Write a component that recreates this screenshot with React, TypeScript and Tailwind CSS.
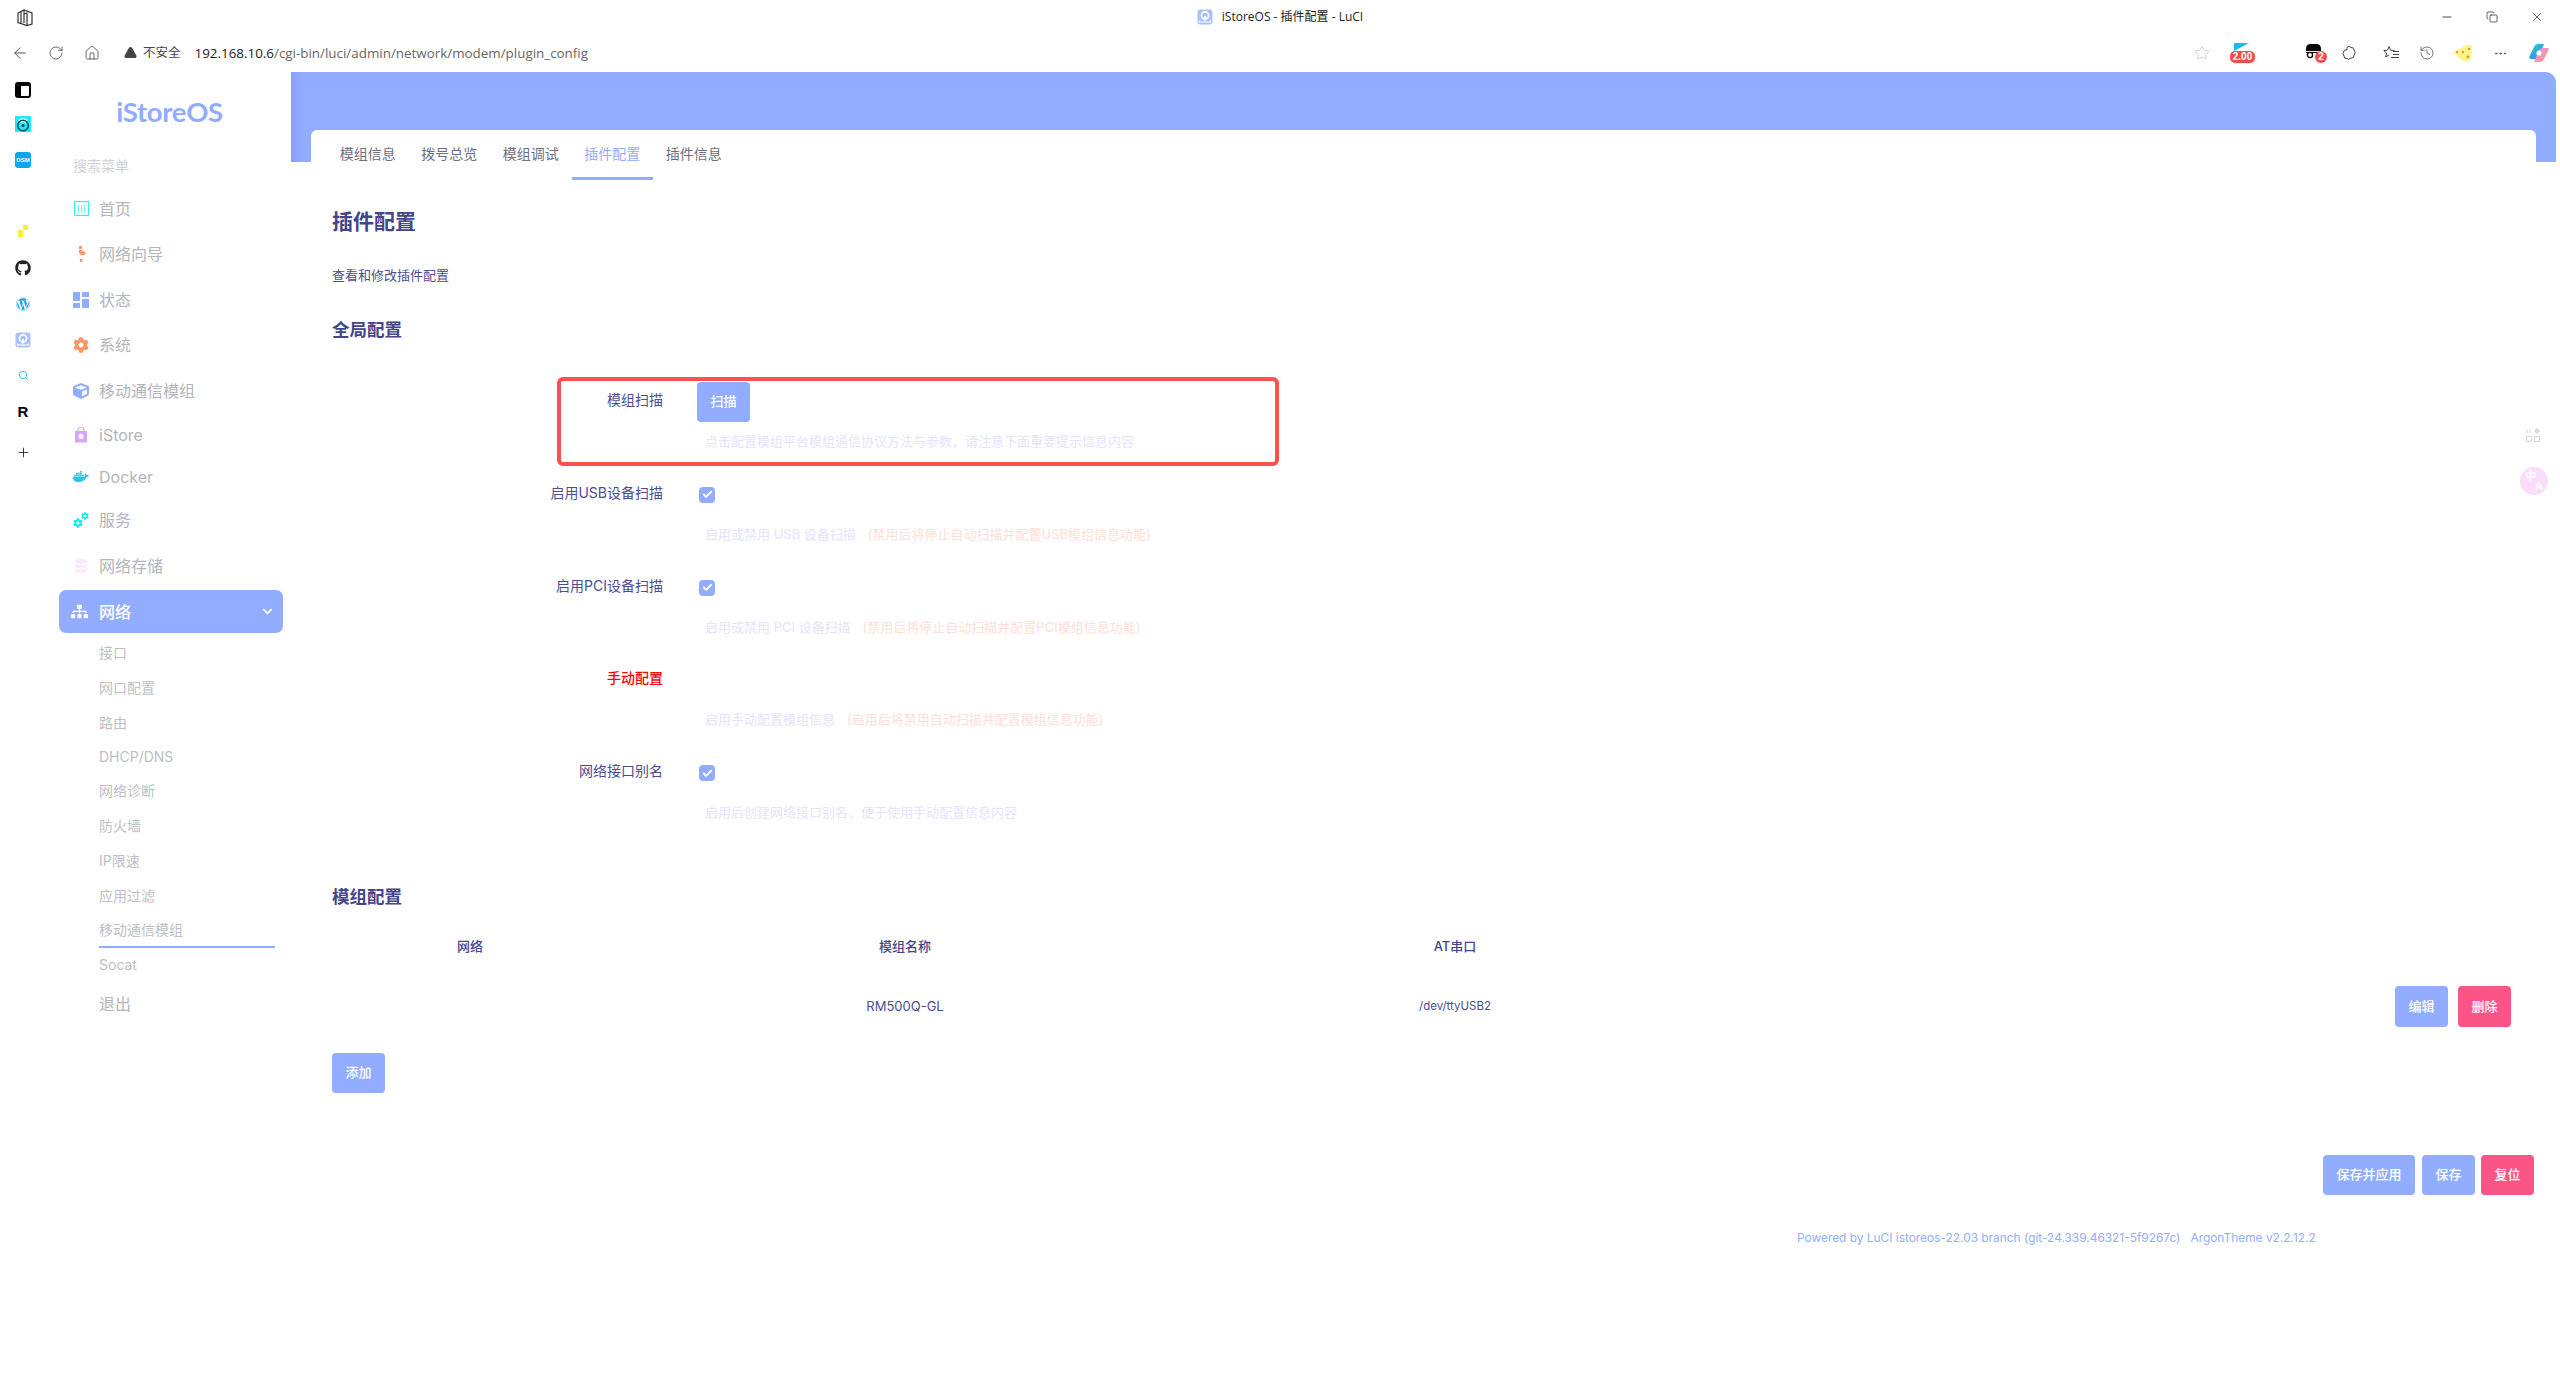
import {
  FaChevronDown,
  FaCog,
  FaCube,
  FaDatabase,
  FaDocker,
  FaGithub,
  FaSitemap,
  FaWordpress,
} from "react-icons/fa";
import {
  ArrowLeft,
  Check,
  Copy,
  History,
  Home,
  Minus,
  MoreHorizontal,
  Plus,
  RotateCw,
  Search,
  Star,
  TriangleAlert,
  X,
} from "lucide-react";
import type { ReactNode } from "react";

const font = "font-['Inter','Noto_Sans_CJK_SC',sans-serif]";

function KeyholeIcon({ size = 16 }: { size?: number }) {
  return (
    <svg width={size} height={size} viewBox="0 0 16 16">
      <rect x="0.5" y="0.5" width="15" height="15" rx="3" fill="#a9c1fb" />
      <circle cx="8" cy="6.5" r="3.6" fill="none" stroke="#fff" strokeWidth="1.6" />
      <rect x="7" y="7" width="2" height="4.5" fill="#fff" />
      <path d="M2.5 11.5v1.5h11v-1.5" fill="none" stroke="#fff" strokeWidth="1.2" />
    </svg>
  );
}

function TitleBar() {
  return (
    <div className="flex h-9 items-center pb-[2px] pl-4 pr-[16px] text-[#222]">
      <div className="flex-1">
        <svg width="18" height="20" viewBox="0 0 18 20" fill="none" stroke="#333" strokeWidth="1.2">
          <path d="M2 6l6-3 8 3v11l-5 1.5-9-3z" />
          <path d="M8 7l3-1v12.5M5 4.5v12M8 3v13" />
        </svg>
      </div>
      <div className="flex items-center gap-[9px] text-[12px] font-['Open_Sans','Noto_Sans_CJK_SC',sans-serif]">
        <KeyholeIcon />
        <span>iStoreOS - 插件配置 - LuCI</span>
      </div>
      <div className="flex flex-1 items-center justify-end gap-[32px]">
        <Minus size={14} strokeWidth={1.4} />
        <Copy size={12} strokeWidth={1.4} />
        <X size={14} strokeWidth={1.2} />
      </div>
    </div>
  );
}

function Toolbar() {
  return (
    <div className="flex h-9 items-center justify-between pb-[2px] pl-[11px] pr-[10px] text-[#444]">
      <div className="flex items-center">
        <ArrowLeft size={18} strokeWidth={1.2} />
        <RotateCw size={16} strokeWidth={1.2} className="ml-[19px]" />
        <Home size={16} strokeWidth={1.2} className="ml-[20px]" />
        <TriangleAlert size={13} strokeWidth={2.4} className="ml-[24px] fill-[#444] text-[#444]" />
        <span className="ml-[6px] text-[12.5px] font-['Open_Sans','Noto_Sans_CJK_SC',sans-serif] text-[#444]">
          不安全
        </span>
        <span className="ml-[14px] text-[13.4px] font-['Open_Sans',sans-serif] text-[#666]">
          <span className="text-[#222]">192.168.10.6</span>/cgi-bin/luci/admin/network/modem/plugin_config
        </span>
      </div>
      <div className="flex items-center">
        <Star size={16} strokeWidth={1} className="text-[#bbb]" />
        <div className="relative ml-[20px] h-[22px] w-[26px]">
          <div className="ml-[4px] mt-[1px] h-0 w-0 border-b-[8px] border-l-[15px] border-b-transparent border-l-[#16bcf5]" />
          <span className="absolute left-0 top-[9px] flex h-[12px] w-[25px] items-center justify-center rounded-[5px] bg-[#f24c4c] text-[10px] font-bold leading-none text-white font-['Liberation_Sans',sans-serif]">
            2.00
          </span>
        </div>
        <div className="relative ml-[50px] h-[20px] w-[20px]">
          <svg width="15" height="15" viewBox="0 0 15 15" className="mt-[1px]">
            <path d="M0 7V5q0-5 5-5h5q5 0 5 5v2z" fill="#000" />
            <path d="M0 8h15v1H0z" fill="#000" />
            <circle cx="4" cy="11" r="2.6" fill="none" stroke="#000" strokeWidth="1.4" />
          </svg>
          <span className="absolute left-[9px] top-[8px] flex h-[12px] w-[12px] items-center justify-center rounded-full bg-[#f24c4c] text-[10px] font-bold leading-none text-white font-['Liberation_Sans',sans-serif]">
            2
          </span>
        </div>
        <svg width="16" height="16" viewBox="0 0 16 16" fill="none" stroke="#444" strokeWidth="1" className="ml-[15px]">
          <path d="M6 2.5q2-2.5 4 0 3-.5 3 2.5 2.5 3 0 5 .5 3.5-3 3-2.500 2.500-4 .5-3 .5-3-2.500-2-2.500 0-5-.5-1.500 3-1z" />
        </svg>
        <svg width="17" height="16" viewBox="0 0 17 16" fill="none" stroke="#444" strokeWidth="1" className="ml-[26px]">
          <path d="M6 1.500l1.500 3.700 4 .3M6 1.500L4.500 5.200.8 5.600l2.800 2.500-.9 3.900L6 10" />
          <path d="M10 6.500h6M10 9.500h6M8 12.500h8" />
        </svg>
        <History size={16} strokeWidth={1.1} className="ml-[19px]" />
        <svg width="22" height="20" viewBox="0 0 22 20" className="ml-[17px]">
          <path d="M1 9l14-7h5l-1 14-6 3-5-3z" fill="#fdf58a" />
          <circle cx="5" cy="9" r="1.2" fill="#e8922a" />
          <circle cx="11" cy="9" r="1.2" fill="#e8922a" />
          <circle cx="17" cy="6" r="1.2" fill="#e8922a" />
          <circle cx="16" cy="14" r="1.4" fill="#e8922a" />
        </svg>
        <MoreHorizontal size={15} strokeWidth={1.4} className="ml-[19px]" />
        <svg width="22" height="20" viewBox="0 0 22 20" className="ml-[20px]">
          <defs>
            <linearGradient id="cp1" x1="0" y1="0" x2="1" y2="1">
              <stop offset="0" stopColor="#2fd6d0" />
              <stop offset="1" stopColor="#2b7cf0" />
            </linearGradient>
            <linearGradient id="cp2" x1="0" y1="0" x2="1" y2="1">
              <stop offset="0" stopColor="#e68cf5" />
              <stop offset="1" stopColor="#f8a07a" />
            </linearGradient>
          </defs>
          <path d="M1 14L6 4q1-3 4-3h6l-5 12q-1 3-4 3H3q-2 0-2-2z" fill="url(#cp1)" />
          <path d="M21 6l-5 10q-1 3-4 3H6l5-12q1-2 4-2h4q2 0 2 1z" fill="url(#cp2)" />
          <circle cx="11" cy="10" r="2.6" fill="#fff" />
        </svg>
      </div>
    </div>
  );
}

function BrowserRail() {
  return (
    <div className="flex w-[48px] shrink-0 flex-col items-center pr-[2px] text-black">
      <div className="mt-[10px] flex h-[16px] w-[16px] flex-col overflow-hidden rounded-[3px] border-2 border-black">
        <div className="h-[2px] shrink-0 bg-black" />
        <div className="w-[4px] flex-1 bg-black" />
      </div>
      <svg width="16" height="16" viewBox="0 0 16 16" className="mt-[18px]">
        <rect width="16" height="16" fill="#1ee8f5" />
        <circle cx="8" cy="9.500" r="5.300" fill="none" stroke="#06405f" strokeWidth="1.500" />
        <circle cx="8" cy="9.500" r="1.500" fill="#06405f" />
        <path d="M3.500 4.500q4.500-3.500 9 0M5.500 6.500q2.500-2 5 0" fill="none" stroke="#fff" strokeWidth="1.200" />
      </svg>
      <div className="mt-[20px] flex h-[16px] w-[16px] items-center justify-center rounded-[3px] bg-[#0ba5f0] text-[6px] font-bold leading-none text-white font-['Liberation_Sans',sans-serif]">
        DSM
      </div>
      <svg width="12" height="14" viewBox="0 0 12 14" className="mt-[56px]">
        <rect x="6" y="1" width="5" height="5" fill="#f8ee3c" />
        <rect x="1" y="6" width="5" height="7" fill="#f8ee3c" />
      </svg>
      <FaGithub size={16} className="mt-[22px] text-[#222]" />
      <FaWordpress size={14} className="mt-[21px] text-[#1e9fe8]" />
      <div className="mt-[21px]">
        <KeyholeIcon />
      </div>
      <Search size={11} strokeWidth={2} className="mt-[22px] text-[#22b5f5]" />
      <span className="mt-[21px] text-[15px] font-black leading-[20px] font-['Liberation_Sans',sans-serif]">R</span>
      <Plus size={15} strokeWidth={1.2} className="mt-[23px]" />
    </div>
  );
}

function MenuItem({
  icon,
  label,
  short,
}: {
  icon?: ReactNode;
  label: string;
  short?: boolean;
}) {
  return (
    <div
      className={`flex items-center pl-[14px] text-[16px] text-[#b2b5bb] ${short ? "h-[42px]" : "h-[45.5px]"}`}
    >
      <span className="flex w-[16px] items-center justify-center">{icon}</span>
      <span className="ml-[10px]">{label}</span>
    </div>
  );
}

function SubItem({ label, short, active }: { label: string; short?: boolean; active?: boolean }) {
  return (
    <div
      className={`ml-[40px] mr-[8px] flex items-center text-[14px] text-[#bcbfc5] ${short ? "h-[33px]" : "h-[35px]"} ${active ? "border-b-2 border-[#92adff]" : ""}`}
    >
      {label}
    </div>
  );
}

function Sidebar() {
  return (
    <div className={`w-[243px] shrink-0 pl-[11px] pr-[8px] pt-[20px] ${font}`}>
      <div className="flex h-[40px] items-center justify-center pr-[3px] text-[27.5px] font-bold tracking-[-0.3px] text-[#92adff] font-['Lato',sans-serif]">
        iStoreOS
      </div>
      <div className="mt-[23px] flex h-[20px] items-center pl-[14px] text-[14px] text-[#cfd1d5]">搜索菜单</div>
      <div className="mt-[11px]">
        <MenuItem
          label="首页"
          icon={
            <svg width="15" height="15" viewBox="0 0 15 15" fill="none" stroke="#35eef2" strokeWidth="1.200">
              <rect x="0.600" y="0.600" width="13.800" height="13.800" />
              <path d="M4.500 4v8M7.500 4v8M10.500 4v8" strokeOpacity="0.700" />
            </svg>
          }
        />
        <MenuItem
          label="网络向导"
          icon={
            <svg width="12" height="16" viewBox="0 0 12 16" fill="#ff9a66">
              <rect x="4" y="0" width="3" height="3" />
              <path d="M4 4h3l4 3-2 2H6l-2-2z" />
              <rect x="5" y="13" width="2.500" height="3" />
              <path d="M2 7q-1 4 3 5" fill="none" stroke="#ffe6d8" strokeWidth="1" />
            </svg>
          }
        />
        <MenuItem
          label="状态"
          icon={
            <svg width="16" height="16" viewBox="0 0 16 16" fill="#92adff">
              <rect x="0" y="0" width="7" height="9" />
              <rect x="9" y="0" width="7" height="5" />
              <rect x="0" y="11" width="7" height="5" />
              <rect x="9" y="7" width="7" height="9" />
            </svg>
          }
        />
        <MenuItem label="系统" icon={<FaCog size={16} className="text-[#ff9560]" />} />
        <MenuItem label="移动通信模组" icon={<FaCube size={16} className="text-[#92adff]" />} />
        <MenuItem
          label="iStore"
          short
          icon={
            <svg width="14" height="16" viewBox="0 0 14 16">
              <path d="M4 4V3a3 3 0 016 0v1" fill="none" stroke="#d9a6ff" strokeWidth="1.200" />
              <rect x="1" y="4" width="12" height="11.500" fill="#d9a6ff" />
              <circle cx="7" cy="9.500" r="2.500" fill="#fff" />
            </svg>
          }
        />
        <MenuItem label="Docker" short icon={<FaDocker size={17} className="text-[#20c8ee]" />} />
        <MenuItem
          label="服务"
          icon={
            <span className="flex w-[16px] flex-col">
              <FaCog size={8} className="self-end text-[#22e4f0]" />
              <FaCog size={10} className="-mt-[2px] text-[#22e4f0]" />
            </span>
          }
        />
        <MenuItem label="网络存储" icon={<FaDatabase size={14} className="text-[#fbecfb]" />} />
        <div className="mt-[1.5px] flex h-[43px] items-center rounded-[7px] bg-[#92adff] pl-[12px] pr-[10px] text-[16px] font-medium text-white">
          <FaSitemap size={17} />
          <span className="ml-[11px] flex-1">网络</span>
          <FaChevronDown size={11} />
        </div>
      </div>
      <div className="mt-[1.5px]">
        <SubItem label="接口" />
        <SubItem label="网口配置" />
        <SubItem label="路由" />
        <SubItem label="DHCP/DNS" short />
        <SubItem label="网络诊断" />
        <SubItem label="防火墙" />
        <SubItem label="IP限速" />
        <SubItem label="应用过滤" />
        <SubItem label="移动通信模组" active />
        <SubItem label="Socat" short />
      </div>
      <div className="mt-[1px] flex h-[45px] items-center pl-[40px] text-[16px] text-[#b2b5bb]">退出</div>
    </div>
  );
}

function Btn({
  children,
  pink,
  className = "",
}: {
  children: ReactNode;
  pink?: boolean;
  className?: string;
}) {
  return (
    <div
      className={`flex items-center justify-center rounded-[4px] text-[13px] font-medium text-white ${pink ? "bg-[#fb5587]" : "bg-[#92adff]"} ${className}`}
    >
      {children}
    </div>
  );
}

function Checkbox() {
  return (
    <div className="ml-[2px] flex h-[16px] w-[16px] items-center justify-center rounded-[4px] bg-[#92adff]">
      <Check size={11} strokeWidth={4} className="text-white" />
    </div>
  );
}

function FormRow({
  label,
  labelClass = "text-[#4d4d8f]",
  control,
  hint,
  warn,
  children,
}: {
  label: string;
  labelClass?: string;
  control?: ReactNode;
  hint: string;
  warn?: string;
  children?: ReactNode;
}) {
  return (
    <div className="relative flex h-[92.8px]">
      <div className={`mt-[12px] h-[20px] w-[331px] text-right text-[14px] leading-[20px] ${labelClass}`}>{label}</div>
      <div className="ml-[34px]">
        <div className="mt-[4px] flex h-[40px] items-center">{control}</div>
        <div className="ml-[8px] mt-[9px] flex h-[20px] items-center whitespace-nowrap text-[13px] leading-[20px] text-[#e4e4fb]">
          <span>{hint}</span>
          {warn && <span className="ml-[12px] text-[#fde0d8]">{warn}</span>}
        </div>
      </div>
      {children}
    </div>
  );
}

function Main() {
  return (
    <div className={`relative min-w-0 flex-1 ${font}`}>
      <div className="h-[90px] rounded-tr-[10px] bg-[linear-gradient(90deg,#889fff_0px,#92adff_12px)] px-[20px] pt-[58px]">
        <div className="flex h-[50px] rounded-t-[6px] bg-white pl-[16px] text-[14px] text-[#6b6f80]">
          <div className="flex w-[81.5px] items-center justify-center pb-[4px]">模组信息</div>
          <div className="flex w-[81.5px] items-center justify-center pb-[4px]">拨号总览</div>
          <div className="flex w-[81.5px] items-center justify-center pb-[4px]">模组调试</div>
          <div className="flex w-[81.5px] items-center justify-center border-b-[3px] border-[#92adff] pb-[1px] text-[#92adff]">
            插件配置
          </div>
          <div className="flex w-[81.5px] items-center justify-center pb-[4px]">插件信息</div>
        </div>
      </div>

      <div className="pl-[41px] pr-[22px]">
        <div className="mt-[45px] h-[30px] text-[21px] font-bold leading-[30px] text-[#45458a]">插件配置</div>
        <div className="mt-[28px] h-[20px] text-[13px] leading-[20px] text-[#4d4d8f]">查看和修改插件配置</div>
        <div className="mt-[33px] h-[24px] text-[17.5px] font-bold leading-[24px] text-[#45458a]">全局配置</div>

        <div className="mt-[36px]">
          <FormRow
            label="模组扫描"
            control={<Btn className="h-[40px] w-[53px]">扫描</Btn>}
            hint="点击配置模组平台模组通信协议方法与参数，请注意下面重要提示信息内容"
          >
            <div className="absolute left-[225px] top-[-1px] h-[89px] w-[722px] rounded-[6px] border-4 border-[#ff5050]" />
          </FormRow>
          <FormRow
            label="启用USB设备扫描"
            control={<Checkbox />}
            hint="启用或禁用 USB 设备扫描"
            warn="(禁用后将停止自动扫描并配置USB模组信息功能)"
          />
          <FormRow
            label="启用PCI设备扫描"
            control={<Checkbox />}
            hint="启用或禁用 PCI 设备扫描"
            warn="(禁用后将停止自动扫描并配置PCI模组信息功能)"
          />
          <FormRow
            label="手动配置"
            labelClass="font-medium text-[#ff0000]"
            hint="启用手动配置模组信息"
            warn="(启用后将禁用自动扫描并配置模组信息功能)"
          />
          <FormRow
            label="网络接口别名"
            control={<Checkbox />}
            hint="启用后创建网络接口别名，便于使用手动配置信息内容"
          />
        </div>

        <div className="mt-[43px] h-[24px] text-[17.5px] font-bold leading-[24px] text-[#45458a]">模组配置</div>
        <div className="mt-[27px] grid h-[20px] grid-cols-[276px_594px_506px_1fr] text-center text-[13px] font-medium leading-[20px] text-[#45458a]">
          <div>网络</div>
          <div>模组名称</div>
          <div>AT串口</div>
        </div>
        <div className="mt-[30px] grid h-[41px] grid-cols-[276px_594px_506px_1fr] items-center text-center text-[13px] text-[#4d4d8f]">
          <div />
          <div>RM500Q-GL</div>
          <div className="text-[11.5px]">/dev/ttyUSB2</div>
          <div className="flex justify-end gap-[10px] pr-[23px]">
            <Btn className="h-[41px] w-[53px]">编辑</Btn>
            <Btn pink className="h-[41px] w-[53px]">
              删除
            </Btn>
          </div>
        </div>
        <Btn className="mt-[26px] h-[40px] w-[53px]">添加</Btn>

        <div className="mt-[62px] flex justify-end">
          <Btn className="h-[40px] w-[92px]">保存并应用</Btn>
          <Btn className="ml-[7px] h-[40px] w-[53px]">保存</Btn>
          <Btn pink className="ml-[6px] h-[40px] w-[53px]">
            复位
          </Btn>
        </div>
        <div className="ml-[1465px] mt-[35px] h-[16px] whitespace-nowrap text-[11.9px] leading-[16px] text-[#92adff]">
          Powered by LuCI istoreos-22.03 branch (git-24.339.46321-5f9267c) &nbsp; ArgonTheme v2.2.12.2
        </div>
      </div>

      <svg width="14" height="14" viewBox="0 0 14 14" className="absolute right-[16px] top-[356px]" fill="none" stroke="#d8d8d8">
        <path d="M1 1v4M4 1v4" />
        <path d="M11 0.500l2.500 2.500L11 5.500 8.500 3z" fill="#d8d8d8" />
        <rect x="0.500" y="8.500" width="5" height="5" />
        <rect x="8.500" y="8.500" width="5" height="5" />
      </svg>
      <div className="absolute right-[8px] top-[395px] flex h-[28px] w-[28px] flex-col justify-center rounded-full bg-[#fbdcfb] px-[5px] text-[11px] font-bold leading-[10px] text-white">
        <span>中</span>
        <span className="self-end">A</span>
      </div>
    </div>
  );
}

export default function App() {
  return (
    <div className="flex h-[1392px] w-[2560px] flex-col overflow-hidden bg-white">
      <div className="font-['Open_Sans','Noto_Sans_CJK_SC',sans-serif]">
        <TitleBar />
        <Toolbar />
      </div>
      <div className="flex min-h-0 flex-1 pr-[4px]">
        <BrowserRail />
        <Sidebar />
        <Main />
      </div>
    </div>
  );
}
